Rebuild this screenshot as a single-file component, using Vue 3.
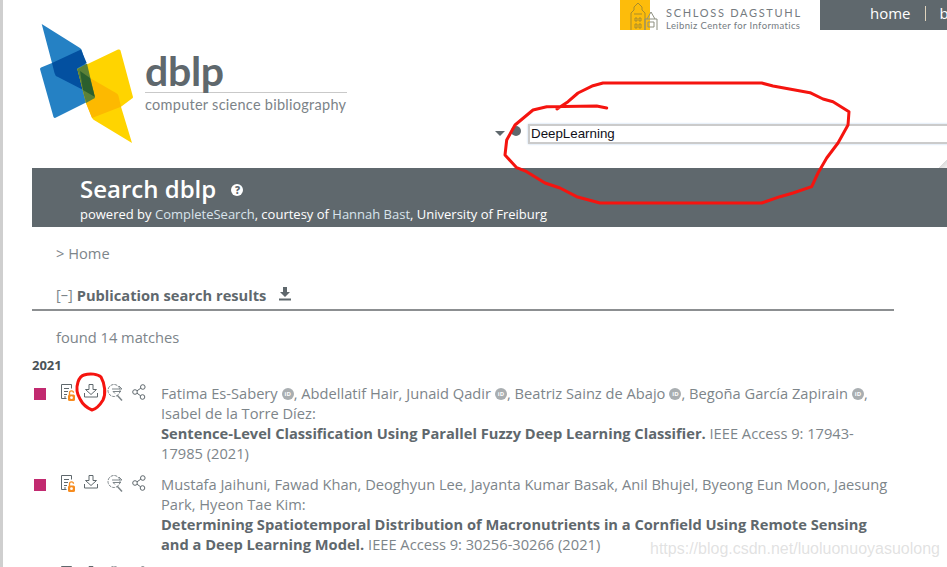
<script setup>
const entries = [
  {
    authors: [
      ['Fatima Es-Sabery', true, ', '], ['Abdellatif Hair', false, ', '], ['Junaid Qadir', true, ', '],
      ['Beatriz Sainz de Abajo', true, ', '], ['Begoña García Zapirain', true, ', '], ['Isabel de la Torre Díez', false, ':']
    ],
    title: 'Sentence-Level Classification Using Parallel Fuzzy Deep Learning Classifier.',
    source: ' IEEE Access 9: 17943-17985 (2021)'
  },
  {
    authors: [
      ['Mustafa Jaihuni', false, ', '], ['Fawad Khan', false, ', '], ['Deoghyun Lee', false, ', '],
      ['Jayanta Kumar Basak', false, ', '], ['Anil Bhujel', false, ', '], ['Byeong Eun Moon', false, ', '],
      ['Jaesung Park', false, ', '], ['Hyeon Tae Kim', false, ':']
    ],
    title: 'Determining Spatiotemporal Distribution of Macronutrients in a Cornfield Using Remote Sensing and a Deep Learning Model.',
    source: ' IEEE Access 9: 30256-30266 (2021)'
  },
  { authors: [], title: '', source: '' }
]
</script>

<template>
  <div class="page">
    <div class="topbar">
      <div class="dagstuhl">
        <div class="castle">
          <svg width="46" height="30" viewBox="0 0 46 30" fill="none" stroke="#a98c2c" stroke-width="1">
            <path d="M11 30V13l3-3V7l4-4 4 4v3l3 3v17M14 14h8M15 18h2v3h-2zM19 18h2v3h-2zM15 24h2v4h-2zM19 24h2v4h-2z" />
            <path d="M25 30V19h12v11M28 22h6v5h-6zM31 12l-4 7M31 12l4 7" stroke="#8d8f80" />
          </svg>
        </div>
        <div class="dag-text">
          <div class="dag-name">SCHLOSS DAGSTUHL</div>
          <div class="dag-sub">Leibniz Center for Informatics</div>
        </div>
      </div>
      <nav class="nav"><span>home</span><i class="sep"></i><span>browse</span></nav>
    </div>

    <div class="brand-row">
      <div class="logo">
        <svg class="mark" width="96" height="122" viewBox="40 23 96 122">
          <path d="M41.700 24 80 48q1.500 1 2 3L95 98 55 118q-1 0-1.500-1L40 69q0-1 1-1.500L52 63z" fill="#2581c4" />
          <path d="M52 63 81 49.500 86.700 63 77.300 68.300 83.300 90 58 77q-3-1-3.500-4z" fill="#0350a0" />
          <path d="M118 49.500q2-.5 2.500 1L133 97q0 1-1 1.500L121 106.700 132 143 94 120q-1.500-1-2-2.500L86 103 77.300 69z" fill="#ffd400" />
          <path d="M90 78 116 93q2 1 2.500 3l2.500 10.700L92 118 86 103 95 98z" fill="#fdb900" />
          <path d="M77.300 69 87 63.500 95 98 86 103z" fill="#5c8137" />
          <path d="M80 71 90 78 95 97 83 90z" fill="#2b5f2d" />
        </svg>
        <div class="wordmark">
          <div class="dblp">dblp</div>
          <div class="tagline">computer science bibliography</div>
        </div>
      </div>
      <div class="search">
        <span class="caret"></span>
        <span class="dot"></span>
        <div class="input">DeepLearning</div>
      </div>
      <span class="curl"></span>
    </div>

    <header class="banner">
      <h1>Search dblp <span class="help">?</span></h1>
      <p>powered by <span class="lnk">CompleteSearch</span>, courtesy of <span class="lnk">Hannah Bast</span>, University of Freiburg</p>
    </header>

    <main class="content">
      <div class="crumb">&gt; <span>Home</span></div>
      <div class="section">
        <span class="toggle">[–]</span> <strong>Publication search results</strong>
        <svg class="dl-head" width="14" height="14" viewBox="0 0 14 14" fill="#5f686d">
          <path d="M5 0h4v5h3L7 10 2 5h3zM1 11.500h12V13.500H1z" />
        </svg>
      </div>
      <div class="found">found 14 matches</div>
      <div class="year">2021</div>
      <div v-for="(e, i) in entries" :key="i" class="entry">
        <span class="mark-box" :class="{ ghost: !e.title }"></span>
        <div class="tools">
          <svg width="14" height="17" viewBox="0 0 14 17" fill="none">
            <path d="M10.500 4.500V.5H.5v14h5M3 4.500h5M3 7.500h4M3 10.500h3M3 13h2" stroke="#5f686d" />
            <path d="M8.500 11V8.800a2 2 0 0 1 4 0" stroke="#f78c1f" stroke-width="1.300" />
            <rect x="7" y="10.500" width="7" height="6.500" rx="1.500" fill="#f78c1f" />
            <circle cx="10.500" cy="13.700" r="1.400" fill="#fff" />
          </svg>
          <svg width="14" height="14" viewBox="0 0 14 14" fill="none" stroke="#5f686d">
            <path d="M5 .5h4v5h3.500L7 10.500 1.500 5.500H5zM.5 9v4h13V9" />
          </svg>
          <svg width="16" height="17" viewBox="0 0 16 17" fill="none" stroke="#7d8589">
            <circle cx="7" cy="6.500" r="6" stroke-dasharray="3 1" />
            <path d="M5 5h10l-3-3M14 7.500H6l2 2" />
            <path d="M10 11l5 5.500" stroke-width="1.500" />
          </svg>
          <svg width="14" height="16" viewBox="0 0 14 16" fill="none" stroke="#5f686d">
            <circle cx="3" cy="8" r="2.300" /><circle cx="10.800" cy="3" r="2.300" /><circle cx="10.500" cy="13" r="2.300" />
            <path d="M5 6.800 8.800 4.200M5 9.200l3.600 2.600" />
          </svg>
        </div>
        <div class="text">
          <template v-for="a in e.authors" :key="a[0]">
            <span>{{ a[0] }}</span><span v-if="a[1]" class="orcid">iD</span><span>{{ a[2] }}</span>
          </template>
          <br v-if="e.title" />
          <strong>{{ e.title }}</strong><span>{{ e.source }}</span>
        </div>
      </div>
    </main>

    <div class="watermark">https://blog.csdn.net/luoluonuoyasuolong</div>
    <svg class="ink" width="947" height="567" viewBox="0 0 947 567" fill="none" stroke="#f5140f" stroke-width="3" stroke-linejoin="round" stroke-linecap="round">
      <path d="M606.700 108 596.700 106 546.700 106.700 533 110 515 125 506.700 140 505 155 516.700 167.700 526.700 171.700 545 183 560 188 576.700 196.700 600 203H761.700L780 196.700 793 193 811.700 186.700 818 173 826.700 158 838 143 848 125 849 111.700 833 101.700 823 99 810 92.700 773 86 761.700 83H603L593 85.700 578 93 568 101.700 557 109" />
      <path d="M84 375C90 373 98 374 101 377 105 384 106 394 103 400 100 405 96 409 92 410 87 408 82 403 80 399 77 394 76 388 78 382 79 379 81 376 84 375Z" />
    </svg>
  </div>
</template>

<style scoped>
.page {
  position: relative;
  width: 947px;
  height: 567px;
  overflow: hidden;
  background: #fff;
  box-sizing: border-box;
  font-family: "Open Sans", sans-serif;
  color: #5f686d;
}
.page::before {
  content: "";
  position: absolute;
  left: 0;
  top: 0;
  bottom: 0;
  width: 3px;
  background: #cfcfcf;
}
.topbar {
  display: flex;
  height: 30px;
  padding-left: 620px;
  overflow: hidden;
}
.dagstuhl {
  display: flex;
  flex: none;
  width: 200px;
}
.castle {
  width: 40px;
  height: 30px;
  flex: none;
  background: linear-gradient(90deg, #fdbc0b 30px, #fff 30px);
  overflow: hidden;
}
.dag-text {
  padding: 7px 0 0 6px;
  white-space: nowrap;
  font-family: "Lato", sans-serif;
  color: #757b7f;
}
.dag-name {
  font-size: 11px;
  line-height: 12px;
  letter-spacing: 1.700px;
}
.dag-sub {
  font-size: 9.500px;
  line-height: 14px;
  letter-spacing: .38px;
}
.nav {
  flex: none;
  display: flex;
  width: 127px;
  box-sizing: border-box;
  align-items: center;
  gap: 14px;
  padding: 0 0 4px 50px;
  background: #5f686d;
  color: #fff;
  font-size: 15px;
  white-space: nowrap;
}
.sep {
  width: 1px;
  height: 15px;
  background: #e0d4bd;
  flex: none;
}
.brand-row {
  display: flex;
  height: 138px;
  position: relative;
}
.logo {
  display: flex;
  padding: 0 0 0 40px;
}
.mark {
  margin-top: -7px;
  flex: none;
}
.wordmark {
  margin: 21px 0 0 9px;
}
.dblp {
  font-family: "Lato", sans-serif;
  font-weight: 700;
  font-size: 41px;
  line-height: 40px;
  letter-spacing: -.3px;
  height: 41px;
  color: #5f686d;
  border-bottom: 1px solid #c9c9c9;
  width: 202px;
}
.tagline {
  font-family: "Lato", sans-serif;
  font-size: 14.500px;
  line-height: 24px;
  letter-spacing: .27px;
  white-space: nowrap;
  color: #7c8388;
}
.search {
  position: absolute;
  left: 495px;
  top: 93.500px;
  display: flex;
  align-items: center;
  white-space: nowrap;
}
.caret {
  width: 0;
  height: 0;
  border: 5px solid transparent;
  border-top: 5px solid #5f686d;
  margin-top: 5px;
}
.dot {
  width: 10px;
  height: 10px;
  border-radius: 50%;
  background: #5f686d;
  margin: -6px 7px 0 6px;
}
.input {
  width: 500px;
  height: 16px;
  padding: 0 2px 0 1px;
  border: 2px solid #cbcbcb;
  box-shadow: 0 0 2px #bcd4ee;
  font: 13.333px/15px "Liberation Sans", sans-serif;
  color: #101018;
  flex: none;
}
.curl {
  position: absolute;
  right: 0;
  bottom: 0;
  width: 8px;
  height: 8px;
  background: linear-gradient(135deg, transparent 50%, #dcdcdc 50%, #f1f1f1 100%);
}
.banner {
  height: 59px;
  margin-left: 32px;
  padding-left: 48px;
  background: #5f686d;
  color: #fff;
  box-sizing: border-box;
}
.banner h1 {
  margin: 0;
  padding-top: 5px;
  font-size: 24px;
  line-height: 31px;
  font-weight: 600;
}
.help {
  display: inline-flex;
  align-items: center;
  justify-content: center;
  width: 12px;
  height: 12px;
  margin-left: 9px;
  border-radius: 50%;
  background: #fff;
  color: #5f686d;
  font-size: 10px;
  line-height: 12px;
  font-weight: 800;
  vertical-align: 4px;
}
.banner p {
  margin: 0;
  font-size: 13px;
  line-height: 20px;
  position: relative;
}
.lnk {
  color: #d9e4ec;
}
.content {
  width: 862px;
  margin-left: 32px;
  font-size: 14.670px;
  line-height: 20px;
  color: #7d858a;
}
.crumb {
  padding: 16px 0 0 24px;
}
.section {
  margin-top: 22px;
  padding: 0 0 4px 24px;
  height: 20px;
  border-bottom: 2px solid #8c8f91;
  display: flex;
  align-items: center;
  gap: 4px;
  white-space: nowrap;
}
.section strong {
  color: #5f686d;
  font-weight: 700;
}
.toggle {
  font-size: 14.500px;
}
.dl-head {
  margin-left: 8px;
  margin-top: -2px;
}
.found {
  padding: 16px 0 0 24px;
}
.year {
  margin-top: 11px;
  font-size: 13px;
  font-weight: 700;
  line-height: 14px;
  color: #4b5358;
}
.entry {
  display: grid;
  grid-template-columns: 28px 101px 1fr;
  margin-top: 2px;
  padding-top: 9px;
  min-height: 20px;
}
.mark-box {
  width: 12px;
  height: 12px;
  margin: 5px 0 0 2px;
  background: #c22a70;
}
.mark-box.ghost {
  background: transparent;
}
.tools {
  display: flex;
  align-items: flex-start;
  gap: 9px;
  height: 20px;
  margin-top: 1px;
  padding-left: 1px;
}
.tools svg {
  flex: none;
}
.text strong {
  color: #5f686d;
  font-weight: 700;
}
.orcid {
  display: inline-block;
  width: 12px;
  height: 12px;
  margin-left: 4px;
  border-radius: 50%;
  background: #a9aeb1;
  color: #fff;
  font-size: 6px;
  line-height: 12px;
  text-align: center;
  font-weight: 700;
  vertical-align: middle;
  margin-top: -2px;
}
.watermark {
  position: absolute;
  left: 650px;
  top: 541px;
  font: 16px/16px "Liberation Sans", sans-serif;
  color: rgba(190, 190, 190, .45);
  white-space: nowrap;
}
.ink {
  position: absolute;
  left: 0;
  top: 0;
  pointer-events: none;
}
</style>
